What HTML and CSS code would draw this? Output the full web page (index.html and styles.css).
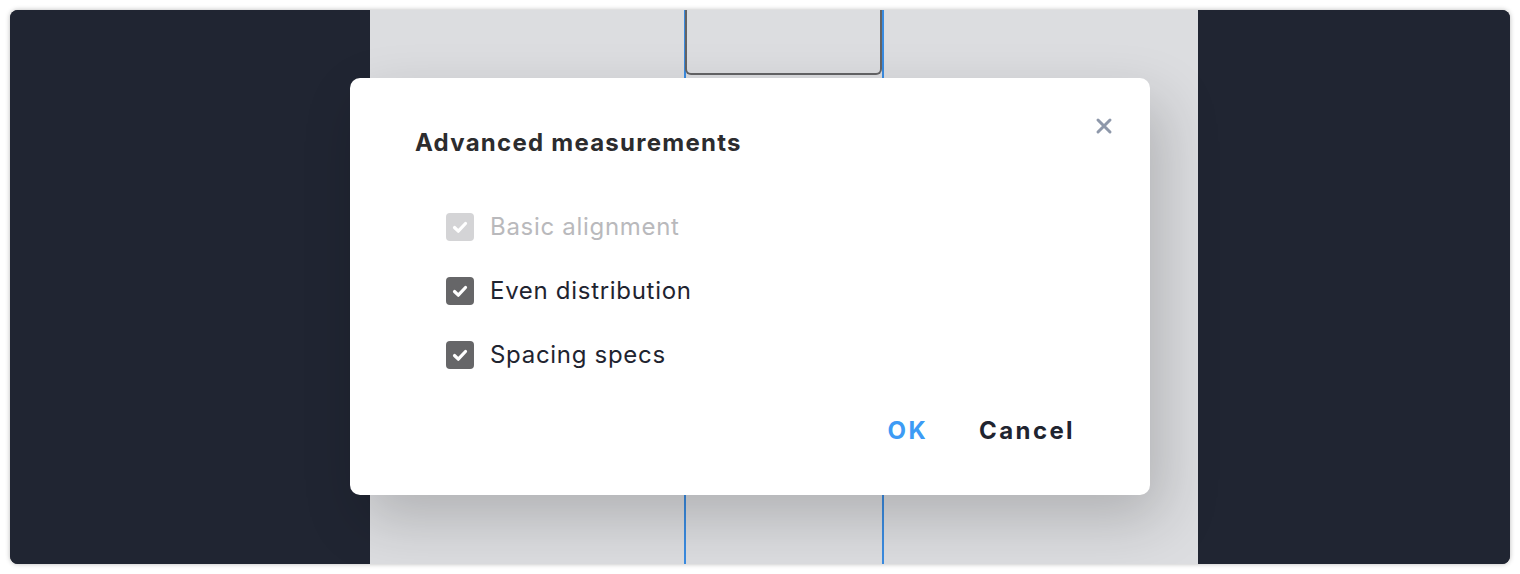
FILE: index.html
```html
<!DOCTYPE html>
<html lang="en">
<head>
<meta charset="utf-8">
<title>Advanced measurements</title>
<link rel="stylesheet" href="styles.css">
</head>
<body>
<div class="frame">
  <div class="side side-left"></div>
  <div class="canvas">
    <div class="guide guide-left"></div>
    <div class="guide guide-right"></div>
    <div class="element"></div>
  </div>
  <div class="side side-right"></div>

  <div class="modal" role="dialog" aria-labelledby="dlg-title">
    <button class="close" aria-label="Close">
      <svg width="18" height="18" viewBox="0 0 18 18"><path d="M3 3L15 15M15 3L3 15" stroke="currentColor" stroke-width="3" stroke-linecap="round"/></svg>
    </button>
    <h2 class="title" id="dlg-title">Advanced measurements</h2>
    <div class="options">
      <label class="option disabled">
        <span class="box"><svg width="28" height="28" viewBox="0 0 28 28"><path d="M8.5 14.5L12.3 18.2L19.5 10.5" fill="none" stroke="#fff" stroke-width="3.2" stroke-linecap="round" stroke-linejoin="round"/></svg></span>
        <span class="text">Basic alignment</span>
      </label>
      <label class="option">
        <span class="box"><svg width="28" height="28" viewBox="0 0 28 28"><path d="M8.5 14.5L12.3 18.2L19.5 10.5" fill="none" stroke="#fff" stroke-width="3.2" stroke-linecap="round" stroke-linejoin="round"/></svg></span>
        <span class="text">Even distribution</span>
      </label>
      <label class="option">
        <span class="box"><svg width="28" height="28" viewBox="0 0 28 28"><path d="M8.5 14.5L12.3 18.2L19.5 10.5" fill="none" stroke="#fff" stroke-width="3.2" stroke-linecap="round" stroke-linejoin="round"/></svg></span>
        <span class="text">Spacing specs</span>
      </label>
    </div>
    <div class="actions">
      <button class="btn btn-ok">OK</button>
      <button class="btn btn-cancel">Cancel</button>
    </div>
  </div>
</div>
</body>
</html>
```

FILE: styles.css
```css
* { box-sizing: border-box; }

html, body {
  margin: 0;
  padding: 0;
  background: #ffffff;
}

body {
  width: 1520px;
  height: 574px;
  padding: 10px;
  font-family: Inter, "Noto Sans", "Liberation Sans", sans-serif;
}

.frame {
  position: relative;
  width: 1500px;
  height: 554px;
  display: flex;
  border-radius: 8px;
  overflow: hidden;
  background: #202532;
  box-shadow: 0 0 5px rgba(0, 0, 0, 0.28);
}

.side {
  background: #202532;
}
.side-left { width: 360px; }
.side-right { flex: 1; }

.canvas {
  position: relative;
  width: 828px;
  background: #dcdde0;
}

.guide {
  position: absolute;
  top: 0;
  bottom: 0;
  width: 1.5px;
  background: #3a8be0;
}
.guide-left { left: 314px; }
.guide-right { left: 512px; }

.element {
  position: absolute;
  left: 315px;
  top: 0;
  width: 197px;
  height: 65px;
  border: 2px solid #646466;
  border-top: none;
  border-radius: 0 0 6px 6px;
  background: #dcdde0;
}

.modal {
  position: absolute;
  left: 340px;
  top: 68px;
  width: 800px;
  height: 417px;
  background: #ffffff;
  border-radius: 10px;
  padding: 50px 77px 0 65px;
  display: flex;
  flex-direction: column;
  box-shadow: 12px 24px 60px rgba(0, 0, 0, 0.2);
}

.close {
  position: absolute;
  right: 37px;
  top: 39px;
  width: 18px;
  height: 18px;
  padding: 0;
  border: none;
  background: none;
  color: #8e98aa;
  display: flex;
}

.title {
  margin: 0;
  font-size: 24px;
  line-height: 30px;
  font-weight: 700;
  letter-spacing: 1.25px;
  color: #2c2c2e;
}

.options {
  margin: 55px 0 0 31px;
  display: flex;
  flex-direction: column;
  gap: 36px;
}

.option {
  display: flex;
  align-items: center;
  gap: 16px;
  height: 28px;
}

.box {
  width: 28px;
  height: 28px;
  border-radius: 4px;
  background: #666668;
  display: flex;
}

.text {
  font-size: 24px;
  line-height: 28px;
  letter-spacing: 0.7px;
  color: #1f2430;
}

.option.disabled .box { background: #d4d4d6; }
.option.disabled .text { color: #b9b9bc; }

.actions {
  margin-top: 47px;
  display: flex;
  justify-content: flex-end;
  gap: 51px;
}

.btn {
  padding: 0;
  border: none;
  background: none;
  font-family: inherit;
  font-size: 24px;
  line-height: 30px;
  font-weight: 700;
}
.btn-ok { color: #3d9bf5; letter-spacing: 2.4px; }
.btn-cancel { color: #1f2430; letter-spacing: 2.4px; margin-right: -2px; }
```
